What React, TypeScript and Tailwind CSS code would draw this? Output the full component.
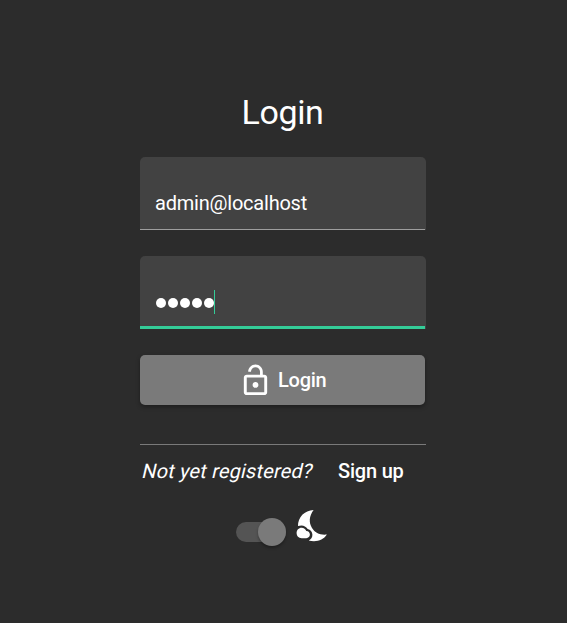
function LockOpenIcon() {
  return (
    <svg viewBox="0 0 24 24" className="h-[35px] w-[35px] shrink-0" fill="currentColor">
      <path d="M12 17c1.1 0 2-.9 2-2s-.9-2-2-2-2 .9-2 2 .9 2 2 2zm6-9h-1V6c0-2.76-2.24-5-5-5S7 3.24 7 6h1.9c0-1.71 1.39-3.1 3.1-3.1 1.71 0 3.1 1.39 3.1 3.1v2H6c-1.1 0-2 .9-2 2v10c0 1.1.9 2 2 2h12c1.1 0 2-.9 2-2V10c0-1.1-.9-2-2-2zm0 12H6V10h12v10z" />
    </svg>
  );
}

function NightsStayIcon() {
  return (
    <svg viewBox="0 -0.7 37 37" className="h-[37px] w-[37px] shrink-0" fill="currentColor">
      <path d="M18.6 2.200C14 8.500 13.700 14.500 17 20.200C20.200 25.300 25 27.500 31.900 26.800C29 31.200 24.500 33.500 19 33.500C17 33.500 15.200 33.300 13.700 32.800C16 31.500 17.400 29.800 17.400 27C17.400 24.200 15.400 21.800 12.700 21.200C11 18.900 9 17.700 6.500 17.700C5.300 17.700 4.200 17.900 3 18.300C2.800 9.500 9.500 2.500 18.600 2.200Z" />
      <path d="M6.600 20C8.900 20 10.600 21.300 11.300 23.200H11.500C13.400 23.200 14.900 24.800 14.900 26.900C14.900 28.900 13.400 30.500 11.300 30.500H6.600C3.700 30.500 1.600 28.300 1.600 25.300C1.600 22.300 3.700 20 6.600 20Z" />
    </svg>
  );
}

export default function App() {
  return (
    <main className="flex h-[623px] w-[567px] flex-col overflow-hidden bg-[#2c2c2c] pl-[140px] font-['Roboto',sans-serif] text-[20px] leading-6 text-white">
      <div className="flex w-[286px] flex-col">
        <h1 className="mt-[92px] pr-px text-center text-[34px] leading-10 tracking-[-0.4px]">Login</h1>

        <div className="mt-[25px] h-[73px] rounded-t-[5px] bg-[#424242]">
          <div className="flex h-[73px] w-[285px] items-start border-b border-[#9e9e9e] pt-[34px] pl-[15px] tracking-[-0.22px]">
            admin@localhost
          </div>
        </div>

        <div className="mt-[26px] h-[73px] rounded-t-[5px] bg-[#424242]">
          <div className="flex h-[73px] w-[285px] items-start border-b-[3px] border-[#34cc98] pt-[34px] pl-[16px]">
            <div className="flex h-6 items-center gap-[2px] pt-[2px]" role="img" aria-label="Password">
              {[0, 1, 2, 3, 4].map((i) => (
                <span key={i} className="h-[10px] w-[10px] shrink-0 rounded-full bg-white" />
              ))}
            </div>
            <span className="h-6 w-px bg-[#34cc98]" />
          </div>
        </div>

        <button className="mt-[26px] flex h-[50px] w-[285px] items-center rounded-[5px] bg-[#7a7a7a] pl-[98px] font-medium shadow-[0_2px_4px_rgba(0,0,0,0.35)]">
          <LockOpenIcon />
          <span className="ml-[5px] tracking-[-0.25px]">Login</span>
        </button>

        <hr className="mt-[39px] border-t border-[#7a7a7a]" />

        <div className="mt-[14px] flex whitespace-nowrap">
          <span className="w-[198px] origin-[0_19px] -skew-x-[13deg] pl-px tracking-[0.16px]">Not yet registered?</span>
          <a className="font-medium tracking-[-0.2px]">Sign up</a>
        </div>

        <div className="mt-[24px] flex items-start pl-[96px]">
          <div className="mt-[15px] flex h-5 w-[50px] items-center justify-end rounded-full bg-[#545454]">
            <span className="h-7 w-7 shrink-0 rounded-full bg-[#7a7a7a] shadow-[0_2px_3px_rgba(0,0,0,0.3)]" />
          </div>
          <div className="ml-[9px]">
            <NightsStayIcon />
          </div>
        </div>
      </div>
    </main>
  );
}
